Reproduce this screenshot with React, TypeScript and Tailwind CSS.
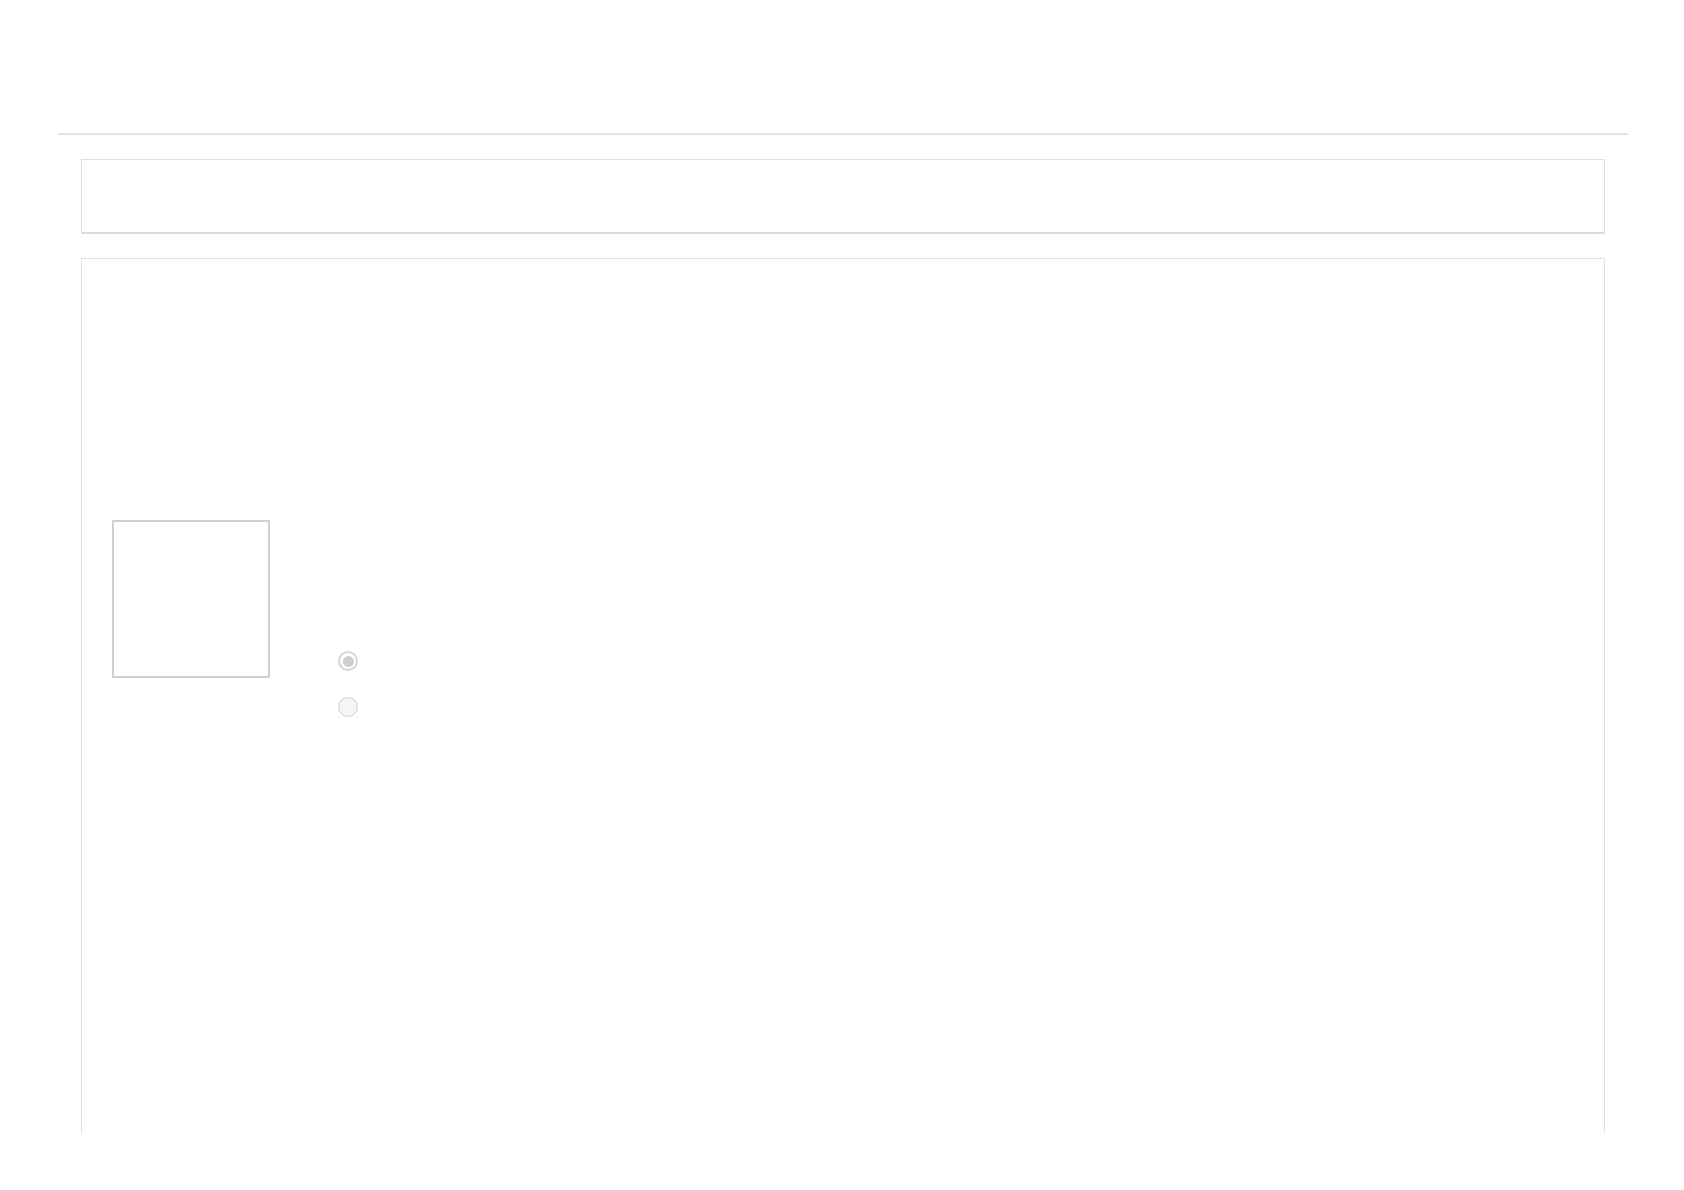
export default function App() {
  return (
    <div className="min-h-[1190px] w-[1684px] bg-white font-['Liberation_Sans',sans-serif]">
      {/* header spacer + rule */}
      <div className="h-[133px]" />
      <div className="mx-[58px] h-[2px] w-[1570px] bg-[#e6e2e5]" />

      <div className="px-[81px] pt-[24px]">
        {/* top panel */}
        <div className="h-[75px] w-[1524px] border border-b-2 border-[#e0e0e0] border-b-[#dcdcdc]" />

        {/* main panel */}
        <div className="mt-[24px] h-[875px] w-[1524px] border-x border-t border-[#e0e0e0] pl-[30px] pt-[261px]">
          <div className="flex">
            <div className="h-[158px] w-[158px] border-2 border-[#cbd0da]" />
            <div className="ml-[68px] mt-[131px] flex flex-col gap-[26px]">
              <div className="flex h-[20px] w-[20px] items-center justify-center rounded-full border-2 border-[#d6d6d6] bg-white">
                <div className="h-[11px] w-[11px] rounded-full bg-[#cfcfcf]" />
              </div>
              <div className="h-[20px] w-[20px] rounded-full border border-[#cfcfcf] bg-[#f5f5f5]" />
            </div>
          </div>
        </div>
      </div>
    </div>
  );
}
